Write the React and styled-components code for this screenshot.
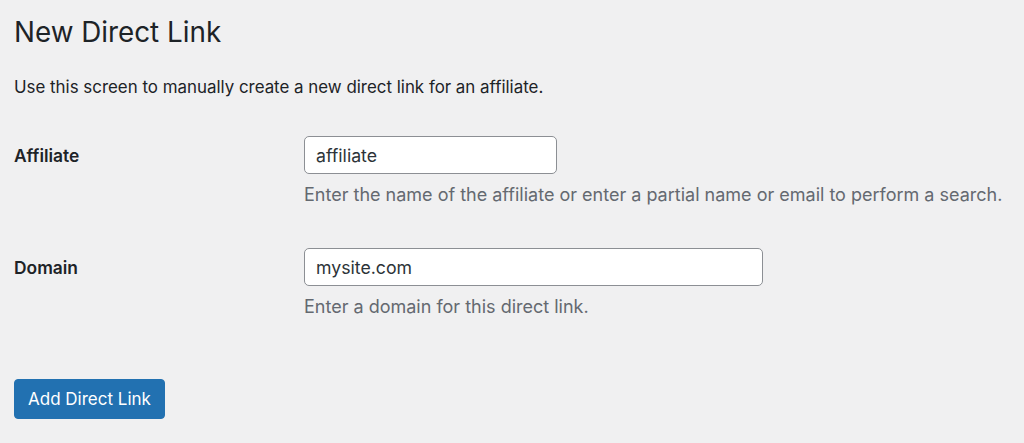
import React from "react";
import styled, { createGlobalStyle } from "styled-components";

const Global = createGlobalStyle`
  html, body { margin: 0; padding: 0; background: #f0f0f1; }
  body {
    font-family: Inter, "Liberation Sans", Arial, sans-serif;
    color: #1d2327;
    -webkit-font-smoothing: antialiased;
  }
`;

const Wrap = styled.div`
  padding: 13px 14px 0 14px;
  display: flex;
  flex-direction: column;
  align-items: flex-start;
`;

const Title = styled.h1`
  margin: 0;
  font-size: 27.8px;
  line-height: 38px;
  font-weight: 400;
  color: #1d2327;
`;

const Intro = styled.p`
  margin: 24px 0 0 0;
  font-size: 16.9px;
  line-height: 24px;
  color: #1d2327;
`;

const Form = styled.form`
  margin-top: 37px;
  display: grid;
  grid-template-columns: 290px 1fr;
  row-gap: 41px;
  align-self: stretch;
`;

const Label = styled.label`
  font-size: 17.4px;
  line-height: 40px;
  font-weight: 600;
  color: #1d2327;
`;

const Field = styled.div`
  display: flex;
  flex-direction: column;
  align-items: flex-start;
  gap: 9px;
`;

const Input = styled.input`
  box-sizing: border-box;
  width: ${(p) => p.$w}px;
  height: 38px;
  padding: 0 11px;
  border: 1px solid #8c8f94;
  border-radius: 5px;
  background: #fff;
  font-family: inherit;
  font-size: 17.7px;
  color: #2c3338;
  outline: none;
`;

const Help = styled.p`
  margin: 0;
  font-size: 18px;
  line-height: 24px;
  color: #646970;
`;

const Button = styled.button`
  margin-top: 60px;
  box-sizing: border-box;
  height: 40px;
  padding: 0 13px;
  border: 1px solid #2271b1;
  border-radius: 4px;
  background: #2271b1;
  color: #fff;
  font-family: inherit;
  font-size: 17px;
  cursor: pointer;
`;

export default function App() {
  return (
    <>
      <Global />
      <Wrap>
        <Title>New Direct Link</Title>
        <Intro>Use this screen to manually create a new direct link for an affiliate.</Intro>
        <Form onSubmit={(e) => e.preventDefault()}>
          <Label htmlFor="affiliate">Affiliate</Label>
          <Field>
            <Input id="affiliate" $w={253} defaultValue="affiliate" />
            <Help>Enter the name of the affiliate or enter a partial name or email to perform a search.</Help>
          </Field>
          <Label htmlFor="domain">Domain</Label>
          <Field>
            <Input id="domain" $w={459} defaultValue="mysite.com" />
            <Help>Enter a domain for this direct link.</Help>
          </Field>
        </Form>
        <Button type="button">Add Direct Link</Button>
      </Wrap>
    </>
  );
}
